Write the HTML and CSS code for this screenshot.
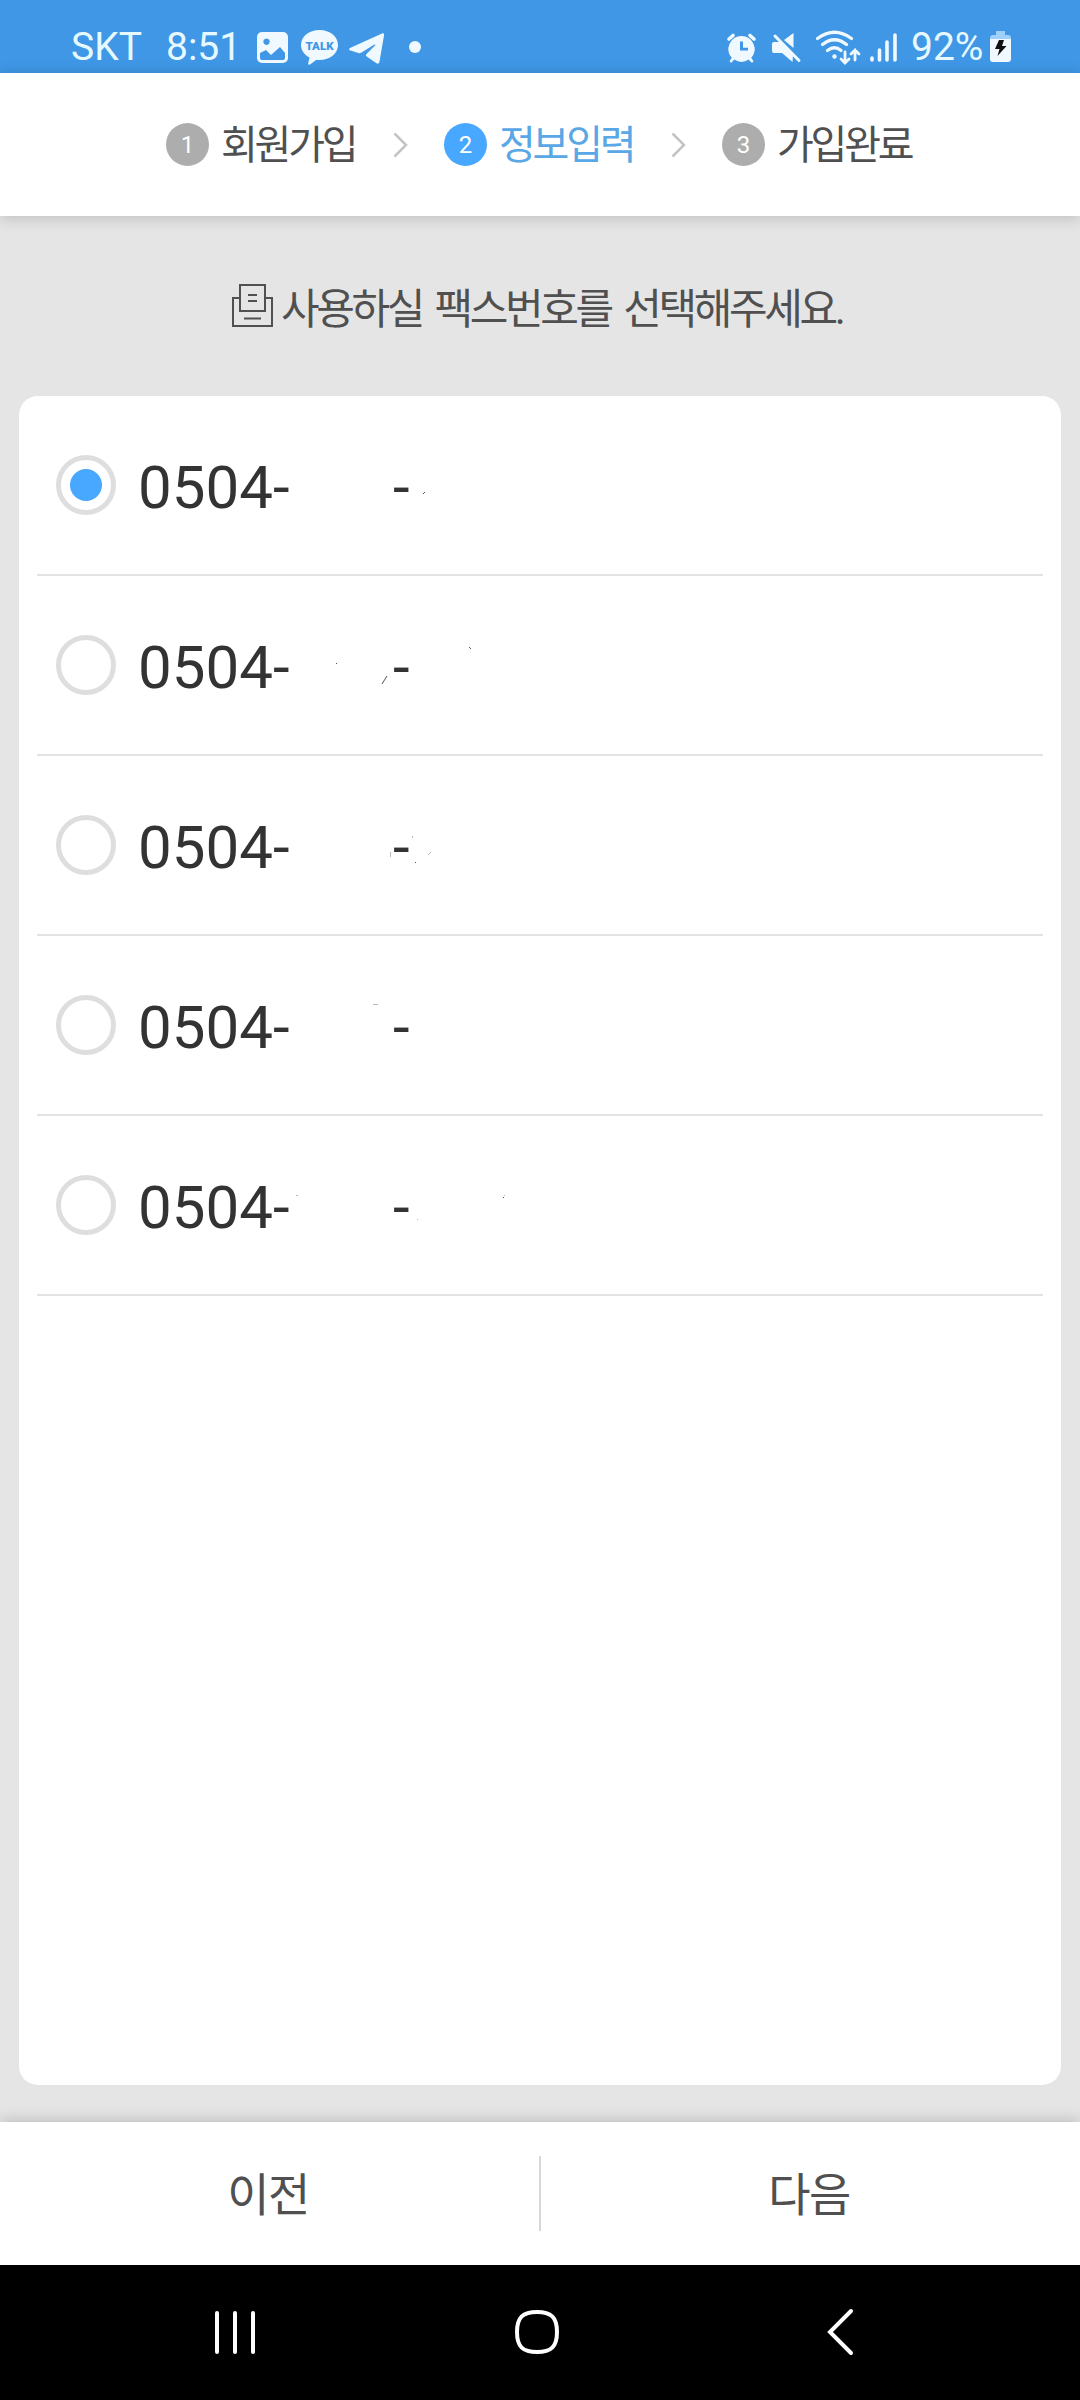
FILE: index.html
```html
<!DOCTYPE html>
<html lang="ko">
<head>
<meta charset="utf-8">
<title>정보입력</title>
<link rel="stylesheet" href="styles.css">
</head>
<body>
<div class="screen">
  <div class="status">
    <span class="carrier">SKT</span>
    <span class="clock">8:51</span>
    <svg class="left-icons" width="170" height="40" viewBox="255 26 170 40" fill="#f0f9ff">
      <path fill-rule="evenodd" d="M262 31h21a5 5 0 0 1 5 5v21a5 5 0 0 1-5 5h-21a5 5 0 0 1-5-5V36a5 5 0 0 1 5-5zM260 52v5q0 2 2 2h21q2 0 2-2v-5l-5-6-9 8-5-5zM266.500 37.500a3.200 3.200 0 1 0 .01 0z"/>
      <path d="M319.500 29c10.500 0 18.500 6.500 18.500 15s-8 15-18.500 15c-1 0-2 0-3-.2l-6.500 4.700c-1 .7-2 0-1.800-1l1.300-6c-5-2.700-8.500-7-8.500-12.500 0-8.500 8-15 18.500-15z"/>
      <text x="319.500" y="49" class="talk">TALK</text>
      <path d="M382 32.500c1.500-.6 2.300.2 2.100 1.600l-4.600 26.500c-.3 2-1.500 2.600-3 1.700l-9.500-6.500c-1.500-1-1.400-2 0-3.300l8-8c.7-.9 0-1.400-1-.8l-12.500 7.800c-1.500.9-2.500.7-4 .3l-7-2.200c-2-.7-2-2 0-2.800z"/>
      <circle cx="415" cy="46" r="6"/>
    </svg>
    <svg class="right-icons" width="175" height="40" viewBox="725 26 175 40" fill="#f0f9ff" stroke="#f0f9ff" stroke-linecap="round">
      <path stroke="none" fill-rule="evenodd" d="M741.500 35a13 13 0 0 1 9.700 21.700l2 3a1.300 1.300 0 0 1-2 1.500l-2.500-2.600a13 13 0 0 1-14.400 0l-2.500 2.600a1.300 1.300 0 0 1-2-1.500l2-3A13 13 0 0 1 741.500 35zM740 40.500v9h8v-2.800h-5v-6.200z"/>
      <path d="M729 38l4-3.500M754 38l-4-3.500" stroke-width="3.600"/>
      <path stroke="none" d="M774 41h6l13 12.500V54l-0.500 7-10.500-9h-8q-2 0-2-2v-7q0-2 2-2zM784 39l9.500-7v15z"/>
      <path d="M775 35l24 24.500" stroke-width="3" />
      <g fill="none" stroke-width="3.200">
        <path d="M817.500 37.500q17-12.500 34 0M822.500 43.500q12-9.500 24 0M827.500 49.500q7-5.500 13.500 0"/>
        <path d="M845 51v10M841 58l4 4 4-4M855 59V49M851 53l4-4 4 4" stroke-width="2.800"/>
      </g>
      <circle cx="834.500" cy="55.500" r="2.200" stroke="none"/>
      <path d="M872 57v2M879.500 49v10M887 41v18M895 34v25" stroke-width="3.600"/>
    </svg>
    <span class="percent">92%</span>
    <svg class="battery" width="22" height="34" viewBox="989 30 22 34">
      <path fill="#9fd0fa" d="M996 31h9v4h3a3 3 0 0 1 3 3v2h-21v-2a3 3 0 0 1 3-3h3z"/>
      <path fill="#f0f9ff" d="M990 39h21v20a3 3 0 0 1-3 3h-15a3 3 0 0 1-3-3z"/>
      <path fill="#111" d="M999 40h5l-2 6h4.500l-9 10 2-7h-4.500z"/>
    </svg>
  </div>
  <header class="steps">
    <div class="step"><span class="num">1</span><span class="label">회원가입</span></div>
    <svg class="chevron" width="16" height="26" viewBox="0 0 16 26"><path d="M1.500 1.500L13 13 1.500 24.500"/></svg>
    <div class="step active"><span class="num">2</span><span class="label">정보입력</span></div>
    <svg class="chevron" width="16" height="26" viewBox="0 0 16 26"><path d="M1.500 1.500L13 13 1.500 24.500"/></svg>
    <div class="step"><span class="num">3</span><span class="label">가입완료</span></div>
  </header>
  <main class="content">
    <h1 class="title">
      <svg width="41" height="43" viewBox="0 0 41 43" fill="none" stroke="#505050" stroke-width="2"><path d="M8 14H1v28h39V14h-7M8 1h25v26H8zM16 11h9M16 17h9M12 34.500h17"/></svg>
      <span>사용하실 팩스번호를 선택해주세요.</span>
    </h1>
    <ul class="card">
      <li class="row"><span class="radio checked"></span><span class="prefix">0504-</span><span class="dash">-</span>
        <svg class="marks" width="300" height="178" viewBox="270 396 300 178"><path d="M423 494l2-2"/></svg></li>
      <li class="row"><span class="radio"></span><span class="prefix">0504-</span><span class="dash">-</span>
        <svg class="marks" width="300" height="178" viewBox="270 576 300 178"><path d="M336 663.500h1M382 684l5-8M469 647l2 2"/></svg></li>
      <li class="row"><span class="radio"></span><span class="prefix">0504-</span><span class="dash">-</span>
        <svg class="marks" width="300" height="178" viewBox="270 756 300 178"><path d="M415 862.500h1"/><path class="faint" d="M428 855l3-3M390.500 852v5M412.500 836v2"/></svg></li>
      <li class="row"><span class="radio"></span><span class="prefix">0504-</span><span class="dash">-</span>
        <svg class="marks" width="300" height="178" viewBox="270 936 300 178"><path class="faint" d="M373 1004.500h5"/></svg></li>
      <li class="row"><span class="radio"></span><span class="prefix">0504-</span><span class="dash">-</span>
        <svg class="marks" width="300" height="178" viewBox="270 1116 300 178"><path d="M503 1197.500h1"/><path class="faint" d="M296 1195.500h2M504 1195.500h1M417 1219.500h1"/></svg></li>
    </ul>
  </main>
  <footer class="actions"><span class="action">이전</span><span class="divider"></span><span class="action">다음</span></footer>
  <nav class="nav">
    <svg width="1080" height="135" viewBox="0 2265 1080 135" fill="none" stroke="#fff" stroke-width="4" stroke-linecap="round">
      <path d="M217 2313v39M235 2313v39M253 2313v39"/>
      <path d="M537 2312c14 0 20 5 20 20s-6 20-20 20-20-5-20-20 6-20 20-20z"/>
      <path d="M851 2311l-21 21 21 21"/>
    </svg>
  </nav>
</div>
</body>
</html>
```
FILE: styles.css
```css
* { box-sizing: border-box; margin: 0; padding: 0; }
body { font-family: Roboto, "Noto Sans CJK KR", sans-serif; color: #505050; }
.screen { width: 1080px; height: 2400px; display: flex; flex-direction: column; background: #e5e5e5; }
.status { height: 73px; background: #3f97e5; color: #e6f9ff; display: flex; align-items: center; padding: 20px 0 0 71px; font-size: 39px; line-height: 46px; white-space: nowrap; }
.carrier { width: 95px; }
.clock { width: 89px; }
.left-icons { margin-right: 300px; }
.percent { margin-left: 11px; width: 78px; }
.talk { font: 900 11.500px Roboto, sans-serif; fill: #3f97e5; text-anchor: middle; }
.steps { height: 143px; background: #fff; display: flex; align-items: center; padding-left: 166px; box-shadow: 0 2px 14px rgba(0, 0, 0, .18); }
.step { display: flex; align-items: center; width: 227px; }
.num { width: 43px; height: 43px; border-radius: 50%; background: #adadad; color: #fff; font-size: 24px; line-height: 45px; text-align: center; margin-right: 12px; }
.label { font-size: 40px; line-height: 58px; padding-top: 3px; letter-spacing: -3.200px; white-space: nowrap; }
.active { color: #5aa7e6; }
.active .num { background: #48a8ff; }
.chevron { margin-right: 35px; fill: none; stroke: #c4c4c4; stroke-width: 2.500; }
.content { flex: 1; padding: 0 19px 37px; display: flex; flex-direction: column; }
.title { height: 180px; padding: 0 0 2px 213px; display: flex; align-items: center; font-size: 42px; font-weight: 400; letter-spacing: -3.400px; word-spacing: 5.500px; white-space: nowrap; gap: 8px; }
.card { flex: 1; background: #fff; border-radius: 19px; padding: 0 18px; list-style: none; }
.row { position: relative; height: 180px; border-bottom: 2px solid #e3e3e3; display: flex; align-items: center; padding-left: 19px; font-size: 60px; line-height: 70px; color: #333; }
.radio { width: 60px; height: 60px; border: 5px solid #dedede; border-radius: 50%; margin-right: 22px; display: flex; align-items: center; justify-content: center; }
.checked::after { content: ""; width: 32px; height: 32px; border-radius: 50%; background: #48a8ff; }
.prefix { width: 255px; padding-top: 5px; }
.dash { padding-top: 5px; }
.marks { position: absolute; left: 233px; top: 0; fill: none; stroke: #555; stroke-width: 1; }
.faint { stroke: #bbb; }
.actions { height: 143px; background: #fff; display: flex; align-items: center; box-shadow: 0 -2px 14px rgba(0, 0, 0, .18); }
.action { flex: 1; text-align: center; font-size: 46px; line-height: 66px; padding: 3px 3px 0 0; letter-spacing: -1.500px; }
.divider { width: 2px; height: 75px; background: #d8d8d8; }
.nav { height: 135px; background: #000; }
.nav svg { display: block; }
```
